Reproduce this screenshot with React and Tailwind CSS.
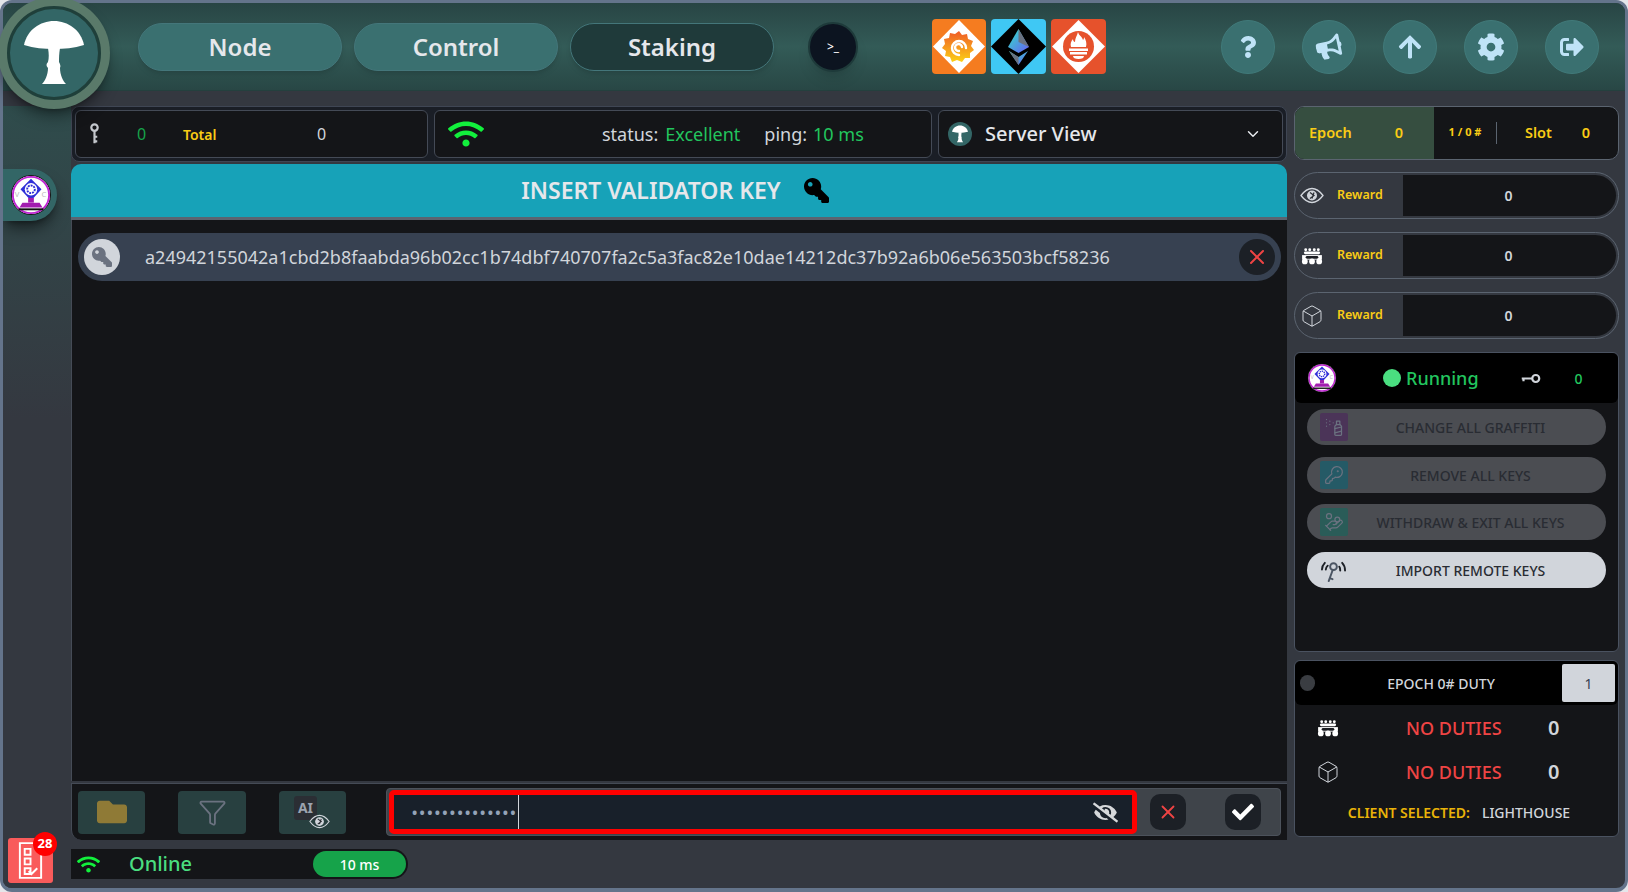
import { Box, ChevronDown, Funnel, HandCoins, KeyRound, SprayCan, X } from 'lucide-react'
import { FaArrowUp, FaBullhorn, FaCheck, FaCog, FaEyeSlash, FaFolder, FaKey, FaQuestion, FaSignOutAlt, FaWifi } from 'react-icons/fa'

const FONT = "font-['Noto_Sans',sans-serif]"

function Mushroom({ className }) {
  return (
    <svg viewBox="0 0 60 64" className={className} fill="white">
      <path d="M0 24C3 9 16 0 30 0s27 9 30 24c-10 3-20 4-30 4S10 27 0 24Z" />
      <path d="M24 27h12c-1 6-1 10-1 14 1 2 2 4 1 6 0 7 3 13 6 16H18c3-3 6-9 6-16-2-2-2-4 0-6 1-4 1-8 0-14Z" />
    </svg>
  )
}

function ValidatorIcon({ className }) {
  return (
    <svg viewBox="0 0 44 44" className={className}>
      <circle cx="22" cy="22" r="20.5" fill="white" stroke="#111" strokeWidth="1" />
      <circle cx="22" cy="22" r="19" fill="none" stroke="#c026d3" strokeWidth="2" />
      <path d="M22 5l11 11-11 12-11-12Z" fill="#2f2fd8" />
      <circle cx="22" cy="16" r="6.5" fill="white" />
      <circle cx="22" cy="16" r="4" fill="none" stroke="#2f2fd8" strokeWidth="2" strokeDasharray="2 1" />
      <rect x="19" y="25" width="6" height="5" fill="#a21caf" />
      <path d="M13 30h18l3 5H10Z" fill="#a21caf" />
      <rect x="9" y="36" width="26" height="2" fill="#111" />
      <text x="5" y="24" fontSize="8" fill="#bbb" fontFamily="Noto Sans">V</text>
      <text x="33" y="24" fontSize="8" fill="#bbb" fontFamily="Noto Sans">C</text>
    </svg>
  )
}

function PeopleIcon({ className }) {
  return (
    <svg viewBox="0 0 24 20" className={className} fill="white">
      {[5, 9.5, 14.5, 19].map((x) => <circle key={x} cx={x} cy="3" r="1.6" />)}
      <rect x="3" y="5" width="18" height="3" rx="1.5" />
      <path d="M1 9h22v5H1Z" />
      <rect x="5" y="10" width="14" height="3" rx="1.5" fill="#1b1d22" />
      {[4, 12, 20].map((x) => <circle key={x} cx={x} cy="16" r="3.2" />)}
    </svg>
  )
}

function EyeIcon({ className }) {
  return (
    <svg viewBox="0 0 24 16" className={className}>
      <path d="M1 8c3-4 7-7 11-7s8 3 11 7c-3 4-7 7-11 7S4 12 1 8Z" fill="none" stroke="#d1d5db" strokeWidth="1.3" />
      <circle cx="12" cy="8" r="5" fill="#d1d5db" />
      <path d="M10 5l4 3-4 3M14 5l-2 6" fill="none" stroke="#2b2e34" strokeWidth="1.2" />
    </svg>
  )
}

function GrafanaLogo() {
  return (
    <svg viewBox="0 0 54 55" className="h-[55px] w-[54px]">
      <defs>
        <linearGradient id="gf" x1="0" y1="1" x2="0" y2="0">
          <stop offset="0" stopColor="#fcd015" />
          <stop offset="1" stopColor="#ef5a28" />
        </linearGradient>
      </defs>
      <rect width="54" height="55" rx="4" fill="#f57c20" />
      <path d="M27 1l26 26.500-26 26.500L1 27.500Z" fill="white" />
      <path d="M27 12l3 4 5-1 1 5 5 2-2 5 3 4-4 3 0 5-5 0-3 4-5-2-5 2-2-5-5-1 1-5-4-3 3-4-1-5 5-1 1-5 5 1Z" fill="url(#gf)" />
      <path d="M34 29a7 7 0 1 0-7 7M27 32a3.500 3.500 0 1 1 3-4" fill="none" stroke="white" strokeWidth="2.400" strokeLinecap="round" />
    </svg>
  )
}

function EthLogo() {
  return (
    <svg viewBox="0 0 55 55" className="h-[55px] w-[55px]">
      <defs>
        <linearGradient id="et" x1="0" y1="0" x2="1" y2="1">
          <stop offset="0" stopColor="#2ee6c4" />
          <stop offset="1" stopColor="#6a5cf5" />
        </linearGradient>
      </defs>
      <rect width="55" height="55" rx="4" fill="#3fc8f4" />
      <path d="M27.500 0L55 27.500 27.500 55 0 27.500Z" fill="black" />
      <path d="M27.500 10L17 28l10.500 6L38 28Z" fill="url(#et)" />
      <path d="M27.500 10L38 28l-10.500-5Z" fill="#6b7280" />
      <path d="M18 32l9.500 6L37 32l-9.500 14Z" fill="url(#et)" />
      <path d="M18 32l9.500 6v8Z" fill="#6b7280" />
    </svg>
  )
}

function PromLogo() {
  return (
    <svg viewBox="0 0 55 55" className="h-[55px] w-[55px]">
      <rect width="55" height="55" rx="4" fill="#e6522c" />
      <path d="M27.500 1L54 27.500 27.500 54 1 27.500Z" fill="white" />
      <circle cx="27.500" cy="27.500" r="15.500" fill="#e6522c" />
      <path d="M27 13c1 4 4 4 5 8 1-1 1-2 1-3 2 3 3 6 2 10H20c-1-3 0-6 2-8 0 2 1 3 2 3 0-4 2-6 3-10Z" fill="white" />
      <rect x="18" y="29.500" width="19" height="2.500" fill="white" />
      <rect x="19" y="33" width="17" height="2.500" fill="white" />
      <path d="M22 37h11c0 2-2 3-5.500 3S22 39 22 37Z" fill="white" />
    </svg>
  )
}

const NAV = [
  { label: 'Node', cls: 'bg-[#3a7070]' },
  { label: 'Control', cls: 'bg-[#3a7070]' },
  { label: 'Staking', cls: 'bg-[#1f3a3a]' },
]

const HEADER_ICONS = [
  { Icon: FaQuestion, size: 22 },
  { Icon: FaBullhorn, size: 26, cls: '-rotate-12' },
  { Icon: FaArrowUp, size: 26 },
  { Icon: FaCog, size: 28 },
  { Icon: FaSignOutAlt, size: 24 },
]

function Header() {
  return (
    <header className="flex h-[88px] shrink-0 items-center border-b border-[#24403e] bg-linear-to-b from-[#284544] via-[#335b57] to-[#284745] pl-[135px] pr-[26px]">
      <nav className="flex gap-3">
        {NAV.map((n) => (
          <div key={n.label} className={`flex h-[48px] w-[204px] items-center justify-center rounded-full border border-[#44767a] text-[24px] font-semibold text-[#e5e7eb] shadow-md ${n.cls}`}>
            {n.label}
          </div>
        ))}
      </nav>
      <div className="ml-[34px] flex h-[50px] w-[50px] items-center justify-center rounded-full border-2 border-[#1e3a3a] bg-[#0c1420] text-[12px] font-medium text-white shadow-lg">
        &gt;_
      </div>
      <div className="ml-[74px] flex items-center gap-[5px]">
        <GrafanaLogo />
        <EthLogo />
        <PromLogo />
      </div>
      <div className="ml-auto flex gap-[27px]">
        {HEADER_ICONS.map(({ Icon, size, cls }, i) => (
          <div key={i} className="flex h-[54px] w-[54px] items-center justify-center rounded-full border border-[#417a7a] bg-[#3a7070] text-[#bfe3f7]">
            <Icon size={size} className={cls} />
          </div>
        ))}
      </div>
    </header>
  )
}

function StatusRow() {
  return (
    <div className="flex h-[56px] shrink-0 gap-[6px] rounded-[8px] border border-[#3f4654] bg-[#1a1e26] p-[3px]">
      <div className="flex w-[353px] items-center rounded-[6px] border border-[#444a56] bg-[#141518] pl-[13px]">
        <svg viewBox="0 0 12 24" className="h-[22px] w-[11px]" fill="none" stroke="#c4c7cc" strokeWidth="2.400">
          <circle cx="6" cy="5" r="3.500" />
          <path d="M6 9v13M6 15h3M6 20h3" />
        </svg>
        <span className="ml-[37px] w-[10px] text-[16px] text-[#16a34a]">0</span>
        <span className="ml-[36px] w-[134px] text-[14px] font-semibold text-[#facc15]">Total</span>
        <span className="text-[16px] text-[#d1d5db]">0</span>
      </div>
      <div className="flex w-[498px] items-center rounded-[6px] border border-[#444a56] bg-[#141518] pl-[13px] text-[18px]">
        <FaWifi size={36} className="text-[#12f03c]" />
        <span className="ml-[118px] text-[#d1d5db]">status:</span>
        <span className="ml-[7px] text-[#22c55e]">Excellent</span>
        <span className="ml-[24px] text-[#d1d5db]">ping:</span>
        <span className="ml-[6px] text-[#22c55e]">10 ms</span>
      </div>
      <div className="flex flex-1 items-center rounded-[6px] border border-[#444a56] bg-[#141518] pl-[9px] pr-[20px]">
        <div className="flex h-[24px] w-[24px] items-center justify-center rounded-full bg-[#336666]">
          <Mushroom className="h-[18px] w-[16px]" />
        </div>
        <span className="ml-[13px] text-[20px] font-medium text-[#e5e7eb]">Server View</span>
        <ChevronDown size={18} className="ml-auto text-[#e5e7eb]" />
      </div>
    </div>
  )
}

function KeyRow() {
  return (
    <div className="flex h-[48px] items-center rounded-full bg-[#374151] pl-[6px] pr-[6px]">
      <div className="flex h-[36px] w-[36px] items-center justify-center rounded-full bg-[#d1d5db]">
        <FaKey size={20} className="-scale-x-100 text-[#6b7280]" />
      </div>
      <span className="ml-[25px] text-[18px] text-[#d1d5db]">
        a24942155042a1cbd2b8faabda96b02cc1b74dbf740707fa2c5a3fac82e10dae14212dc37b92a6b06e563503bcf58236
      </span>
      <div className="ml-auto flex h-[36px] w-[36px] items-center justify-center rounded-full bg-[#1c2026]">
        <X size={24} className="text-[#ef4444]" />
      </div>
    </div>
  )
}

function Toolbar() {
  return (
    <div className="mt-[2px] flex h-[57px] shrink-0 items-center rounded-bl-[10px] border-l border-t border-[#454b56] bg-[#141518] pl-[6px] pr-[6px]">
      <div className="flex h-[43px] w-[67px] items-center justify-center rounded-[4px] bg-[#284040]">
        <FaFolder size={30} className="text-[#8f7a36]" />
      </div>
      <div className="ml-[33px] flex h-[43px] w-[68px] items-center justify-center rounded-[4px] bg-[#284040]">
        <Funnel size={29} strokeWidth={1.500} className="text-[#6b7280]" />
      </div>
      <div className="relative ml-[33px] flex h-[43px] w-[67px] items-center justify-center rounded-[4px] bg-[#284040]">
        <span className="mb-[8px] mr-[14px] rounded-[3px] bg-[#2b2e34] px-[4px] py-[3px] text-[14px] font-bold leading-[18px] text-[#9ca3af]">AI</span>
        <EyeIcon className="absolute bottom-[5px] right-[16px] h-[15px] w-[21px]" />
      </div>
      <div className="ml-[40px] flex h-[48px] flex-1 items-center rounded-[4px] border border-[#4c525b] bg-[#3f444a] pl-[2px]">
        <div className="flex h-[44px] w-[748px] items-center rounded-[5px] border-[5px] border-[#ff0000] bg-[#18202a] pl-[18px] pr-[14px]">
          <span className="text-[14px] font-bold tracking-[2.300px] text-[#94a3b8]">••••••••••••••</span>
          <span className="h-[34px] w-px bg-[#d1d5db]" />
          <FaEyeSlash size={25} className="ml-auto text-[#d6d8db]" />
        </div>
        <button className="ml-[13px] flex h-[36px] w-[36px] items-center justify-center rounded-[10px] bg-[#1c2026]">
          <X size={22} className="text-[#ef4444]" />
        </button>
        <button className="ml-[39px] flex h-[36px] w-[36px] items-center justify-center rounded-[10px] bg-[#1c2026]">
          <FaCheck size={22} className="text-white" />
        </button>
      </div>
    </div>
  )
}

function OnlineBar() {
  return (
    <div className="mt-[9px] flex h-[30px] w-[337px] items-center rounded-r-full bg-[#141518] pl-[6px]">
      <FaWifi size={23} className="text-[#12f03c]" />
      <span className="ml-[29px] text-[20px] font-medium text-[#4ade80]">Online</span>
      <span className="ml-auto mr-[2px] flex h-[26px] w-[93px] items-center justify-center rounded-full bg-[#16a34a] text-[14px] font-medium text-white">
        10 ms
      </span>
    </div>
  )
}

function EpochCard() {
  return (
    <div className="flex h-[54px] shrink-0 overflow-hidden rounded-[10px] border border-[#5b6470] bg-[#141518] text-[#facc15]">
      <div className="flex w-[139px] items-center justify-between bg-[#364e40] pl-[14px] pr-[31px] text-[14.500px] font-semibold">
        <span>Epoch</span>
        <span>0</span>
      </div>
      <div className="flex w-[62px] items-center justify-center pb-[2px] text-[11px] font-bold">1 / 0 #</div>
      <div className="my-[15px] w-px bg-[#5b6470]" />
      <div className="flex flex-1 items-center justify-between pl-[28px] pr-[28px] text-[14.500px] font-semibold">
        <span>Slot</span>
        <span>0</span>
      </div>
    </div>
  )
}

const REWARDS = [
  <EyeIcon key="eye" className="h-[17px] w-[24px]" />,
  <PeopleIcon key="people" className="h-[18px] w-[22px]" />,
  <Box key="box" size={24} strokeWidth={1} className="text-[#d1d5db]" />,
]

function RewardRow({ icon }) {
  return (
    <div className="flex h-[47px] shrink-0 overflow-hidden rounded-full border border-[#5b6470]">
      <div className="flex w-[108px] items-center pl-[5px]">
        <span className="flex w-[24px] justify-center">{icon}</span>
        <span className="ml-[13px] text-[12.500px] font-semibold text-[#facc15]">Reward</span>
      </div>
      <div className="my-[2px] mr-[2px] flex flex-1 items-center justify-center rounded-r-full bg-[#141518] pr-[2px] text-[14px] font-semibold text-[#d1d5db]">
        0
      </div>
    </div>
  )
}

const ACTIONS = [
  { label: 'CHANGE ALL GRAFFITI', Icon: SprayCan, box: 'bg-[#4b3458]', mt: 'mt-[6px]' },
  { label: 'REMOVE ALL KEYS', Icon: KeyRound, box: 'bg-[#255a66]', mt: 'mt-[12px]' },
  { label: 'WITHDRAW & EXIT ALL KEYS', Icon: HandCoins, box: 'bg-[#2a5c58]', mt: 'mt-[11px]' },
]

function RunningCard() {
  return (
    <div className="h-[300px] shrink-0 rounded-[6px] border border-[#4a5260] bg-[#141518]">
      <div className="flex h-[50px] items-center rounded-[6px] bg-black pl-[12px]">
        <ValidatorIcon className="h-[30px] w-[30px]" />
        <span className="ml-[46px] h-[18px] w-[18px] rounded-full bg-[#4ade80]" />
        <span className="ml-[5px] text-[18px] font-medium text-[#22c55e]">Running</span>
        <svg viewBox="0 0 24 12" className="ml-[41px] h-[11px] w-[21px]" fill="none" stroke="#d1d5db" strokeWidth="2.500">
          <circle cx="18" cy="6" r="4" />
          <path d="M14 6H2M4 6v3" />
        </svg>
        <span className="ml-[34px] text-[14px] font-medium text-[#22c55e]">0</span>
      </div>
      {ACTIONS.map(({ label, Icon, box, mt }) => (
        <div key={label} className={`mx-[12px] flex h-[36px] items-center rounded-full bg-[#4b4d52] pl-[13px] ${mt}`}>
          <span className={`flex h-[28px] w-[28px] items-center justify-center rounded-[2px] ${box}`}>
            <Icon size={20} strokeWidth={1.500} className="text-[#6b7280]" />
          </span>
          <span className="flex-1 pr-[13px] text-center text-[14px] font-medium text-[#292c33]">{label}</span>
        </div>
      ))}
      <div className="mx-[12px] mt-[12px] flex h-[36px] items-center rounded-full bg-[#d1d5db] pl-[12px]">
        <svg viewBox="0 0 30 26" className="h-[25px] w-[29px]" fill="none" stroke="#1c2026" strokeWidth="2" strokeLinecap="round">
          <path d="M6 5c-2 2-3 4-3 7M9 8c-1 1-2 2-2 4M24 5c2 2 3 5 3 8M21 9c1 1 1 3 1 4" />
          <circle cx="15" cy="9" r="3.500" stroke="#4b5563" />
          <path d="M14 13L10 24M11 21l3 1" stroke="#4b5563" />
        </svg>
        <span className="flex-1 pr-[13px] text-center text-[14px] font-medium text-[#292c33]">IMPORT REMOTE KEYS</span>
      </div>
    </div>
  )
}

function DutyRow({ icon }) {
  return (
    <div className="flex h-[44px] items-center">
      <span className="flex w-[63px] justify-center pl-[2px]">{icon}</span>
      <span className="ml-[48px] w-[96px] whitespace-nowrap text-[18px] font-medium text-[#ef4444]">NO DUTIES</span>
      <span className="ml-[46px] text-[20px] font-semibold text-[#d1d5db]">0</span>
    </div>
  )
}

function DutyCard() {
  return (
    <div className="mt-[8px] h-[177px] shrink-0 rounded-[6px] border border-[#4a5260] bg-[#141518]">
      <div className="flex h-[44px] items-center rounded-[6px] bg-black pr-[3px]">
        <span className="ml-[5px] h-[16px] w-[15px] rounded-full bg-[#3a3d42]" />
        <span className="flex-1 pl-[5px] text-center text-[14px] font-medium text-[#d1d5db]">EPOCH 0# DUTY</span>
        <span className="flex h-[38px] w-[53px] items-center justify-center rounded-[2px] bg-[#d1d5db] text-[14px] text-[#374151]">1</span>
      </div>
      <div className="mt-[1px]">
        <DutyRow icon={<PeopleIcon className="h-[18px] w-[22px]" />} />
        <DutyRow icon={<Box size={24} strokeWidth={1} className="text-[#d1d5db]" />} />
      </div>
      <div className="mt-[8px] flex justify-center pl-[5px] text-[14px] font-semibold">
        <span className="text-[#eab308]">CLIENT SELECTED:</span>
        <span className="ml-[12px] font-medium text-[#d1d5db]">LIGHTHOUSE</span>
      </div>
    </div>
  )
}

export default function App() {
  return (
    <div className={`relative h-[892px] w-[1628px] overflow-hidden bg-[#e4e6ea] ${FONT}`}>
      <div className="flex h-full flex-col overflow-hidden rounded-[12px] border-x-[3px] border-b-[4px] border-t-[3px] border-[#64748b] bg-[#343840]">
        <Header />

        <div className="mt-[15px] flex min-h-0 flex-1">
          {/* rail */}
          <aside className="w-[68px] shrink-0 bg-linear-to-b from-[#2f4c4c] to-[#343840] to-40% pt-[63px]">
            <div className="flex h-[52px] w-[54px] items-center justify-center rounded-r-[26px] bg-[#336666] pl-[1px] shadow-lg shadow-black/50">
              <ValidatorIcon className="h-[42px] w-[42px]" />
            </div>
          </aside>

          <main className="flex w-[1216px] shrink-0 flex-col">
            <StatusRow />
            <div className="mt-[2px] flex h-[56px] shrink-0 items-center justify-center rounded-t-[10px] border-b-[3px] border-[#5b6470] bg-[#17a2b8] pr-[8px]">
              <span className="text-[23px] font-semibold text-[#e5e7eb]">INSERT VALIDATOR KEY</span>
              <FaKey size={25} className="ml-[23px] -scale-x-100 text-black" />
            </div>
            <div className="min-h-0 h-[561px] shrink-0 border-l border-[#454b56] bg-[#141518] px-[6px] pt-[13px]">
              <KeyRow />
            </div>
            <Toolbar />
            <OnlineBar />
          </main>

          <aside className="ml-[7px] flex w-[325px] shrink-0 flex-col">
            <EpochCard />
            <div className="mt-[12px] flex shrink-0 flex-col gap-[13px]">
              {REWARDS.map((icon, i) => <RewardRow key={i} icon={icon} />)}
            </div>
            <div className="mt-[13px]">
              <RunningCard />
            </div>
            <DutyCard />
          </aside>
        </div>
      </div>

      {/* logo sits over the header and the rail */}
      <div className="absolute -left-[2px] -top-[3px] flex h-[112px] w-[112px] items-center justify-center rounded-full bg-[#5a7a6a] shadow-lg shadow-black/40">
        <div className="flex h-[94px] w-[94px] items-center justify-center rounded-full border-[3px] border-[#1f3f3a] bg-[#336666]">
          <Mushroom className="h-[64px] w-[60px]" />
        </div>
      </div>

      {/* notes button with its badge */}
      <div className="absolute left-[8px] top-[838px] flex h-[45px] w-[45px] items-center justify-center rounded-[3px] bg-[#f95b5b]">
        <svg viewBox="0 0 30 40" className="h-[39px] w-[29px]" fill="none" stroke="white" strokeWidth="2">
          <path d="M4 2h22v36H4Z" />
          <path d="M9 8h6v6H9ZM9 18h6v6H9ZM9 28h6v6H9ZM13 31l3 3 6-6" />
        </svg>
        <span className="absolute -right-[4px] -top-[6px] flex h-[24px] w-[24px] items-center justify-center rounded-full bg-[#ff0000] text-[13px] font-bold text-white">
          28
        </span>
      </div>
    </div>
  )
}
